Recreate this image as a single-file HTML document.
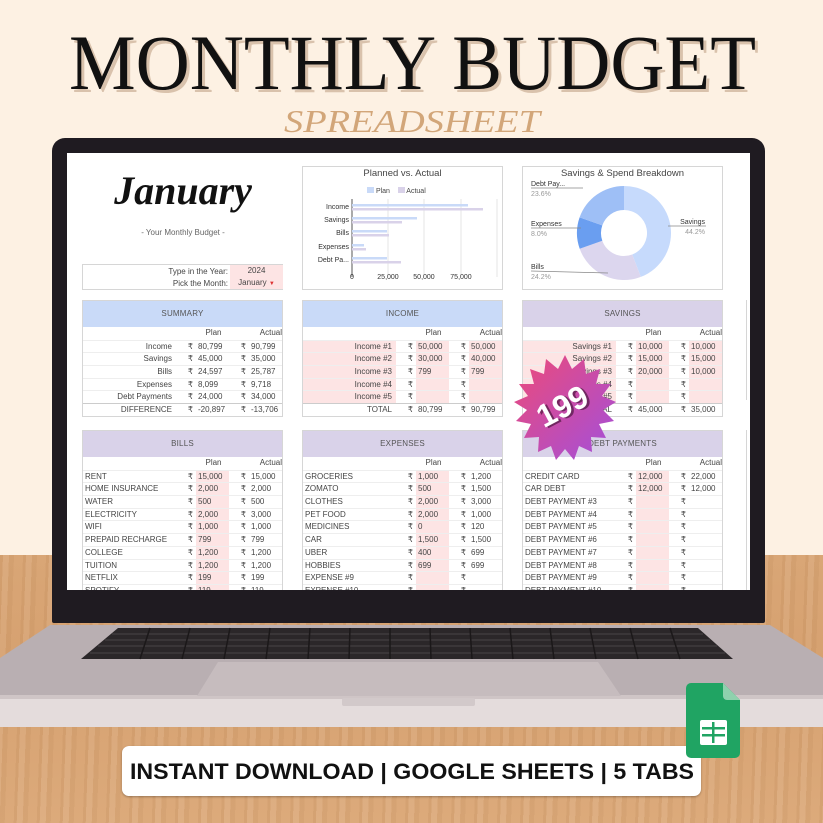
<!DOCTYPE html>
<html><head><meta charset="utf-8"><style>
*{margin:0;padding:0;box-sizing:border-box}
body{width:823px;height:823px;overflow:hidden;position:relative;background:#fdf1e3;font-family:"Liberation Sans",sans-serif}
.abs{position:absolute}
.wood{left:0;top:555px;width:823px;height:268px;background:
repeating-linear-gradient(92deg,rgba(150,95,45,.10) 0 3px,rgba(255,255,255,.06) 3px 9px,rgba(140,90,40,.08) 9px 14px,transparent 14px 23px),
linear-gradient(180deg,#d9a676,#d6a170 40%,#dcaa7b)}
.screen{left:67px;top:153px;width:683px;height:437px;background:#fff;overflow:hidden;font-size:8px;color:#454545}
.blk{position:absolute;width:201px;border:1px solid #d6d6d6;background:#fff}
.hd{height:26px;line-height:26px;text-align:center;font-size:8px;color:#555;letter-spacing:.2px}
.r{display:grid;grid-template-columns:93px 20px 33px 20px 33px;height:12.7px;line-height:12.7px;border-top:1px solid #eee;white-space:nowrap}
.r>div{overflow:hidden}
.r .l{text-align:right;padding-right:4px}
.r .c{text-align:right;padding-right:3px}
.r .v{padding-left:2px}
.L .l{text-align:left;padding-left:2px}
.pk{background:#fde4e4}
.sub{border-top:none}
</style></head><body>
<div class="abs wood"></div>

<svg class="abs" style="left:0;top:0" width="823" height="140">
<text x="72" y="92" textLength="687" lengthAdjust="spacingAndGlyphs" font-family="Liberation Serif" font-size="78" fill="#d9c2ac">MONTHLY BUDGET</text>
<text x="69" y="89" textLength="687" lengthAdjust="spacingAndGlyphs" font-family="Liberation Serif" font-size="78" fill="#111">MONTHLY BUDGET</text>
<text x="284" y="132" textLength="256" lengthAdjust="spacingAndGlyphs" font-family="Liberation Serif" font-style="italic" font-size="32" fill="#d2a679">SPREADSHEET</text>
</svg>

<!-- laptop base -->
<svg class="abs" style="left:0;top:600px" width="823" height="140">
<polygon points="50,25 770,25 823,58 823,127 0,127 0,58" fill="#b9afb2"/>
<polygon points="0,98 823,98 823,127 0,127" fill="#e4dcdc"/>
<polygon points="0,95 823,95 823,99 0,99" fill="#cfc5c6"/>
<polygon points="118,28 698,28 733,59 81,59" fill="#2b2729"/>
<g stroke="#4a4447" stroke-width="1">
<line x1="112" y1="34" x2="703" y2="34"/><line x1="105" y1="40" x2="710" y2="40"/><line x1="98" y1="46" x2="717" y2="46"/><line x1="90" y1="53" x2="725" y2="53"/>
</g>
<g stroke="#1b1819" stroke-width="1.5">
<line x1="150" y1="28" x2="140" y2="59"/><line x1="190" y1="28" x2="182" y2="59"/><line x1="230" y1="28" x2="224" y2="59"/><line x1="270" y1="28" x2="266" y2="59"/><line x1="310" y1="28" x2="308" y2="59"/><line x1="350" y1="28" x2="349" y2="59"/><line x1="390" y1="28" x2="390" y2="59"/><line x1="430" y1="28" x2="431" y2="59"/><line x1="470" y1="28" x2="472" y2="59"/><line x1="510" y1="28" x2="513" y2="59"/><line x1="550" y1="28" x2="554" y2="59"/><line x1="590" y1="28" x2="596" y2="59"/><line x1="630" y1="28" x2="638" y2="59"/><line x1="670" y1="28" x2="680" y2="59"/>
</g>
<polygon points="218,62 598,62 621,96 197,96" fill="#c6bcbe"/>
<rect x="342" y="98" width="133" height="8" rx="2" fill="#d2c9ca"/>
</svg>

<!-- bezel -->
<div class="abs" style="left:52px;top:138px;width:713px;height:485px;background:#1f1b21;border-radius:13px 13px 2px 2px"></div>

<div class="abs screen">
 <!-- January -->
 <div class="abs" style="left:36px;top:14px;width:160px;text-align:center;font-family:'Liberation Serif',serif;font-style:italic;font-weight:bold;font-size:40px;color:#111">January</div>
 <div class="abs" style="left:36px;top:75px;width:160px;text-align:center;color:#666">- Your Monthly Budget -</div>
 <div class="abs" style="left:15px;top:111px;width:201px;height:26px;border:1px solid #d6d6d6">
  <div class="abs" style="left:0;top:1px;width:145px;text-align:right;line-height:12px">Type in the Year:<br>Pick the Month:</div>
  <div class="abs pk" style="left:147px;top:0;width:53px;height:24px;text-align:center;line-height:12px">2024<br>January <span style="color:#d33;font-size:6px">▼</span></div>
 </div>

 <!-- bar chart -->
 <div class="abs" style="left:235px;top:13px;width:201px;height:124px;border:1px solid #d6d6d6">
  <div class="abs" style="left:0;top:1px;width:199px;text-align:center;font-size:9.5px;color:#444">Planned vs. Actual</div>
  <div class="abs" style="left:64px;top:20px;font-size:7px"><span style="display:inline-block;width:7px;height:6px;background:#c9daf8"></span> Plan &nbsp;&nbsp; <span style="display:inline-block;width:7px;height:6px;background:#d9d2e9"></span> Actual</div>
  <svg class="abs" style="left:0;top:0" width="200" height="124">
   <g stroke="#e4e4e4"><line x1="85" y1="32" x2="85" y2="110"/><line x1="121" y1="32" x2="121" y2="110"/><line x1="158" y1="32" x2="158" y2="110"/><line x1="194" y1="32" x2="194" y2="110"/></g>
   <line x1="49" y1="32" x2="49" y2="110" stroke="#555"/>
   <g fill="#c9daf8"><rect x="49" y="37" width="116" height="2.5"/><rect x="49" y="50" width="65" height="2.5"/><rect x="49" y="63" width="35" height="2.5"/><rect x="49" y="77" width="12" height="2.5"/><rect x="49" y="90" width="35" height="2.5"/></g>
   <g fill="#d9d2e9"><rect x="49" y="41" width="131" height="2.5"/><rect x="49" y="54" width="50" height="2.5"/><rect x="49" y="67" width="37" height="2.5"/><rect x="49" y="81" width="14" height="2.5"/><rect x="49" y="94" width="49" height="2.5"/></g>
   <g font-family="Liberation Sans" font-size="7" fill="#333" text-anchor="end"><text x="46" y="42">Income</text><text x="46" y="55">Savings</text><text x="46" y="68">Bills</text><text x="46" y="82">Expenses</text><text x="46" y="95">Debt Pa...</text></g>
   <g font-family="Liberation Sans" font-size="7" fill="#333" text-anchor="middle"><text x="49" y="112">0</text><text x="85" y="112">25,000</text><text x="121" y="112">50,000</text><text x="158" y="112">75,000</text></g>
  </svg>
 </div>

 <!-- pie chart -->
 <div class="abs" style="left:455px;top:13px;width:201px;height:124px;border:1px solid #d6d6d6">
  <div class="abs" style="left:0;top:1px;width:199px;text-align:center;font-size:9.5px;color:#444">Savings &amp; Spend Breakdown</div>
  <svg class="abs" style="left:0;top:0" width="200" height="124">
   <g transform="translate(101,66)">
    <path d="M0,-47 A47,47 0 0 1 16.8,43.9 L8.2,21.5 A23,23 0 0 0 0,-23 Z" fill="#c6dafc"/>
    <path d="M16.8,43.9 A47,47 0 0 1 -44.3,15.7 L-21.7,7.7 A23,23 0 0 0 8.2,21.5 Z" fill="#dcd6ee"/>
    <path d="M-44.3,15.7 A47,47 0 0 1 -44.4,-15.6 L-21.7,-7.6 A23,23 0 0 0 -21.7,7.7 Z" fill="#6a9ef0"/>
    <path d="M-44.4,-15.6 A47,47 0 0 1 0,-47 L0,-23 A23,23 0 0 0 -21.7,-7.6 Z" fill="#9ebff6"/>
   </g>
   <g stroke="#888" stroke-width=".7"><line x1="8" y1="21" x2="60" y2="21"/><line x1="8" y1="61" x2="58" y2="61"/><line x1="8" y1="104" x2="85" y2="106"/><line x1="145" y1="59" x2="183" y2="59"/></g>
   <g font-family="Liberation Sans" font-size="7"><text x="8" y="19" fill="#333">Debt Pay...</text><text x="8" y="29" fill="#999">23.6%</text><text x="8" y="59" fill="#333">Expenses</text><text x="8" y="69" fill="#999">8.0%</text><text x="8" y="102" fill="#333">Bills</text><text x="8" y="112" fill="#999">24.2%</text><text x="182" y="57" fill="#333" text-anchor="end">Savings</text><text x="182" y="67" fill="#999" text-anchor="end">44.2%</text></g>
  </svg>
 </div>

 <!-- SUMMARY -->
 <div class="blk" style="left:15px;top:147px">
  <div class="hd" style="background:#c9daf8">SUMMARY</div>
  <div class="r sub"><div></div><div></div><div class="v" style="text-align:center">Plan</div><div></div><div class="v" style="text-align:right">Actual</div></div>
  <div class="r"><div class="l">Income</div><div class="c">₹</div><div class="v">80,799</div><div class="c">₹</div><div class="v">90,799</div></div>
  <div class="r"><div class="l">Savings</div><div class="c">₹</div><div class="v">45,000</div><div class="c">₹</div><div class="v">35,000</div></div>
  <div class="r"><div class="l">Bills</div><div class="c">₹</div><div class="v">24,597</div><div class="c">₹</div><div class="v">25,787</div></div>
  <div class="r"><div class="l">Expenses</div><div class="c">₹</div><div class="v">8,099</div><div class="c">₹</div><div class="v">9,718</div></div>
  <div class="r"><div class="l">Debt Payments</div><div class="c">₹</div><div class="v">24,000</div><div class="c">₹</div><div class="v">34,000</div></div>
  <div class="r" style="border-top:1px solid #ccc"><div class="l">DIFFERENCE</div><div class="c">₹</div><div class="v">-20,897</div><div class="c">₹</div><div class="v">-13,706</div></div>
 </div>

 <!-- INCOME -->
 <div class="blk" style="left:235px;top:147px">
  <div class="hd" style="background:#c9daf8">INCOME</div>
  <div class="r sub"><div></div><div></div><div class="v" style="text-align:center">Plan</div><div></div><div class="v" style="text-align:right">Actual</div></div>
  <div class="r"><div class="l pk">Income #1</div><div class="c">₹</div><div class="v pk">50,000</div><div class="c">₹</div><div class="v pk">50,000</div></div>
  <div class="r"><div class="l pk">Income #2</div><div class="c">₹</div><div class="v pk">30,000</div><div class="c">₹</div><div class="v pk">40,000</div></div>
  <div class="r"><div class="l pk">Income #3</div><div class="c">₹</div><div class="v pk">799</div><div class="c">₹</div><div class="v pk">799</div></div>
  <div class="r"><div class="l pk">Income #4</div><div class="c">₹</div><div class="v pk"></div><div class="c">₹</div><div class="v pk"></div></div>
  <div class="r"><div class="l pk">Income #5</div><div class="c">₹</div><div class="v pk"></div><div class="c">₹</div><div class="v pk"></div></div>
  <div class="r" style="border-top:1px solid #ccc"><div class="l">TOTAL</div><div class="c">₹</div><div class="v">80,799</div><div class="c">₹</div><div class="v">90,799</div></div>
 </div>

 <!-- SAVINGS -->
 <div class="blk" style="left:455px;top:147px">
  <div class="hd" style="background:#d9d2e9">SAVINGS</div>
  <div class="r sub"><div></div><div></div><div class="v" style="text-align:center">Plan</div><div></div><div class="v" style="text-align:right">Actual</div></div>
  <div class="r"><div class="l pk">Savings #1</div><div class="c">₹</div><div class="v pk">10,000</div><div class="c">₹</div><div class="v pk">10,000</div></div>
  <div class="r"><div class="l pk">Savings #2</div><div class="c">₹</div><div class="v pk">15,000</div><div class="c">₹</div><div class="v pk">15,000</div></div>
  <div class="r"><div class="l pk">Savings #3</div><div class="c">₹</div><div class="v pk">20,000</div><div class="c">₹</div><div class="v pk">10,000</div></div>
  <div class="r"><div class="l pk">Savings #4</div><div class="c">₹</div><div class="v pk"></div><div class="c">₹</div><div class="v pk"></div></div>
  <div class="r"><div class="l pk">Savings #5</div><div class="c">₹</div><div class="v pk"></div><div class="c">₹</div><div class="v pk"></div></div>
  <div class="r" style="border-top:1px solid #ccc"><div class="l">TOTAL</div><div class="c">₹</div><div class="v">45,000</div><div class="c">₹</div><div class="v">35,000</div></div>
 </div>

 <div class="abs" style="left:679px;top:147px;width:6px;height:100px;border-left:1px solid #d6d6d6"></div>
 <div class="abs" style="left:679px;top:277px;width:6px;height:170px;border-left:1px solid #d6d6d6"></div>

 <!-- BILLS -->
 <div class="blk L" style="left:15px;top:277px">
  <div class="hd" style="background:#d9d2e9">BILLS</div>
  <div class="r sub"><div></div><div></div><div class="v" style="text-align:center">Plan</div><div></div><div class="v" style="text-align:right">Actual</div></div>
  <div class="r"><div class="l">RENT</div><div class="c">₹</div><div class="v pk">15,000</div><div class="c">₹</div><div class="v">15,000</div></div>
  <div class="r"><div class="l">HOME INSURANCE</div><div class="c">₹</div><div class="v pk">2,000</div><div class="c">₹</div><div class="v">2,000</div></div>
  <div class="r"><div class="l">WATER</div><div class="c">₹</div><div class="v pk">500</div><div class="c">₹</div><div class="v">500</div></div>
  <div class="r"><div class="l">ELECTRICITY</div><div class="c">₹</div><div class="v pk">2,000</div><div class="c">₹</div><div class="v">3,000</div></div>
  <div class="r"><div class="l">WIFI</div><div class="c">₹</div><div class="v pk">1,000</div><div class="c">₹</div><div class="v">1,000</div></div>
  <div class="r"><div class="l">PREPAID RECHARGE</div><div class="c">₹</div><div class="v pk">799</div><div class="c">₹</div><div class="v">799</div></div>
  <div class="r"><div class="l">COLLEGE</div><div class="c">₹</div><div class="v pk">1,200</div><div class="c">₹</div><div class="v">1,200</div></div>
  <div class="r"><div class="l">TUITION</div><div class="c">₹</div><div class="v pk">1,200</div><div class="c">₹</div><div class="v">1,200</div></div>
  <div class="r"><div class="l">NETFLIX</div><div class="c">₹</div><div class="v pk">199</div><div class="c">₹</div><div class="v">199</div></div>
  <div class="r"><div class="l">SPOTIFY</div><div class="c">₹</div><div class="v pk">119</div><div class="c">₹</div><div class="v">119</div></div>
 </div>

 <!-- EXPENSES -->
 <div class="blk L" style="left:235px;top:277px">
  <div class="hd" style="background:#d9d2e9">EXPENSES</div>
  <div class="r sub"><div></div><div></div><div class="v" style="text-align:center">Plan</div><div></div><div class="v" style="text-align:right">Actual</div></div>
  <div class="r"><div class="l">GROCERIES</div><div class="c">₹</div><div class="v pk">1,000</div><div class="c">₹</div><div class="v">1,200</div></div>
  <div class="r"><div class="l">ZOMATO</div><div class="c">₹</div><div class="v pk">500</div><div class="c">₹</div><div class="v">1,500</div></div>
  <div class="r"><div class="l">CLOTHES</div><div class="c">₹</div><div class="v pk">2,000</div><div class="c">₹</div><div class="v">3,000</div></div>
  <div class="r"><div class="l">PET FOOD</div><div class="c">₹</div><div class="v pk">2,000</div><div class="c">₹</div><div class="v">1,000</div></div>
  <div class="r"><div class="l">MEDICINES</div><div class="c">₹</div><div class="v pk">0</div><div class="c">₹</div><div class="v">120</div></div>
  <div class="r"><div class="l">CAR</div><div class="c">₹</div><div class="v pk">1,500</div><div class="c">₹</div><div class="v">1,500</div></div>
  <div class="r"><div class="l">UBER</div><div class="c">₹</div><div class="v pk">400</div><div class="c">₹</div><div class="v">699</div></div>
  <div class="r"><div class="l">HOBBIES</div><div class="c">₹</div><div class="v pk">699</div><div class="c">₹</div><div class="v">699</div></div>
  <div class="r"><div class="l">EXPENSE #9</div><div class="c">₹</div><div class="v pk"></div><div class="c">₹</div><div class="v"></div></div>
  <div class="r"><div class="l">EXPENSE #10</div><div class="c">₹</div><div class="v pk"></div><div class="c">₹</div><div class="v"></div></div>
 </div>

 <!-- DEBT -->
 <div class="blk L" style="left:455px;top:277px">
  <div class="hd" style="background:#d9d2e9">DEBT PAYMENTS</div>
  <div class="r sub"><div></div><div></div><div class="v" style="text-align:center">Plan</div><div></div><div class="v" style="text-align:right">Actual</div></div>
  <div class="r"><div class="l">CREDIT CARD</div><div class="c">₹</div><div class="v pk">12,000</div><div class="c">₹</div><div class="v">22,000</div></div>
  <div class="r"><div class="l">CAR DEBT</div><div class="c">₹</div><div class="v pk">12,000</div><div class="c">₹</div><div class="v">12,000</div></div>
  <div class="r"><div class="l">DEBT PAYMENT #3</div><div class="c">₹</div><div class="v pk"></div><div class="c">₹</div><div class="v"></div></div>
  <div class="r"><div class="l">DEBT PAYMENT #4</div><div class="c">₹</div><div class="v pk"></div><div class="c">₹</div><div class="v"></div></div>
  <div class="r"><div class="l">DEBT PAYMENT #5</div><div class="c">₹</div><div class="v pk"></div><div class="c">₹</div><div class="v"></div></div>
  <div class="r"><div class="l">DEBT PAYMENT #6</div><div class="c">₹</div><div class="v pk"></div><div class="c">₹</div><div class="v"></div></div>
  <div class="r"><div class="l">DEBT PAYMENT #7</div><div class="c">₹</div><div class="v pk"></div><div class="c">₹</div><div class="v"></div></div>
  <div class="r"><div class="l">DEBT PAYMENT #8</div><div class="c">₹</div><div class="v pk"></div><div class="c">₹</div><div class="v"></div></div>
  <div class="r"><div class="l">DEBT PAYMENT #9</div><div class="c">₹</div><div class="v pk"></div><div class="c">₹</div><div class="v"></div></div>
  <div class="r"><div class="l">DEBT PAYMENT #10</div><div class="c">₹</div><div class="v pk"></div><div class="c">₹</div><div class="v"></div></div>
 </div>
</div>

<!-- badge -->
<svg class="abs" style="left:510px;top:352px" width="110" height="110">
 <defs><linearGradient id="g" x1="0" y1="0" x2="1" y2="1"><stop offset="0" stop-color="#ee4a78"/><stop offset="1" stop-color="#a24fdc"/></linearGradient></defs>
 <polygon fill="url(#g)" points="55,3 62,17 74,7 76,22 90,17 86,32 101,32 92,44 106,50 93,58 104,69 89,72 96,86 81,85 82,100 69,94 64,108 55,97 46,108 41,94 28,100 29,85 14,86 21,72 6,69 17,58 4,50 18,44 9,32 24,32 20,17 34,22 36,7 48,17"/>
 <text x="55" y="66" transform="rotate(-28 55 55)" text-anchor="middle" font-family="Liberation Sans" font-weight="bold" font-size="32" fill="#3b1030" opacity=".6">199</text>
 <text x="53" y="64" transform="rotate(-28 55 55)" text-anchor="middle" font-family="Liberation Sans" font-weight="bold" font-size="32" fill="#fff">199</text>
</svg>

<!-- banner -->
<div class="abs" style="left:122px;top:746px;width:579px;height:50px;background:#fff;border-radius:7px;box-shadow:0 1px 2px rgba(0,0,0,.3)"></div>
<svg class="abs" style="left:122px;top:746px" width="579" height="50">
 <text x="8" y="33" textLength="564" lengthAdjust="spacingAndGlyphs" font-family="Liberation Sans" font-weight="bold" font-size="22" fill="#111">INSTANT DOWNLOAD | GOOGLE SHEETS | 5 TABS</text>
</svg>

<!-- sheets icon -->
<svg class="abs" style="left:686px;top:683px" width="56" height="76">
 <path d="M5,0 H37 L54,17 V70 a5,5 0 0 1 -5,5 H5 a5,5 0 0 1 -5,-5 V5 a5,5 0 0 1 5,-5 Z" fill="#20a463"/>
 <path d="M37,0 L54,17 H41 a4,4 0 0 1 -4,-4 Z" fill="#8ed1ad"/>
 <rect x="14" y="37" width="27" height="25" rx="2" fill="#fff"/>
 <g fill="#20a463"><rect x="26" y="39" width="2.5" height="21"/><rect x="16" y="44" width="23" height="2.5"/><rect x="16" y="51" width="23" height="2.5"/></g>
</svg>
</body></html>
